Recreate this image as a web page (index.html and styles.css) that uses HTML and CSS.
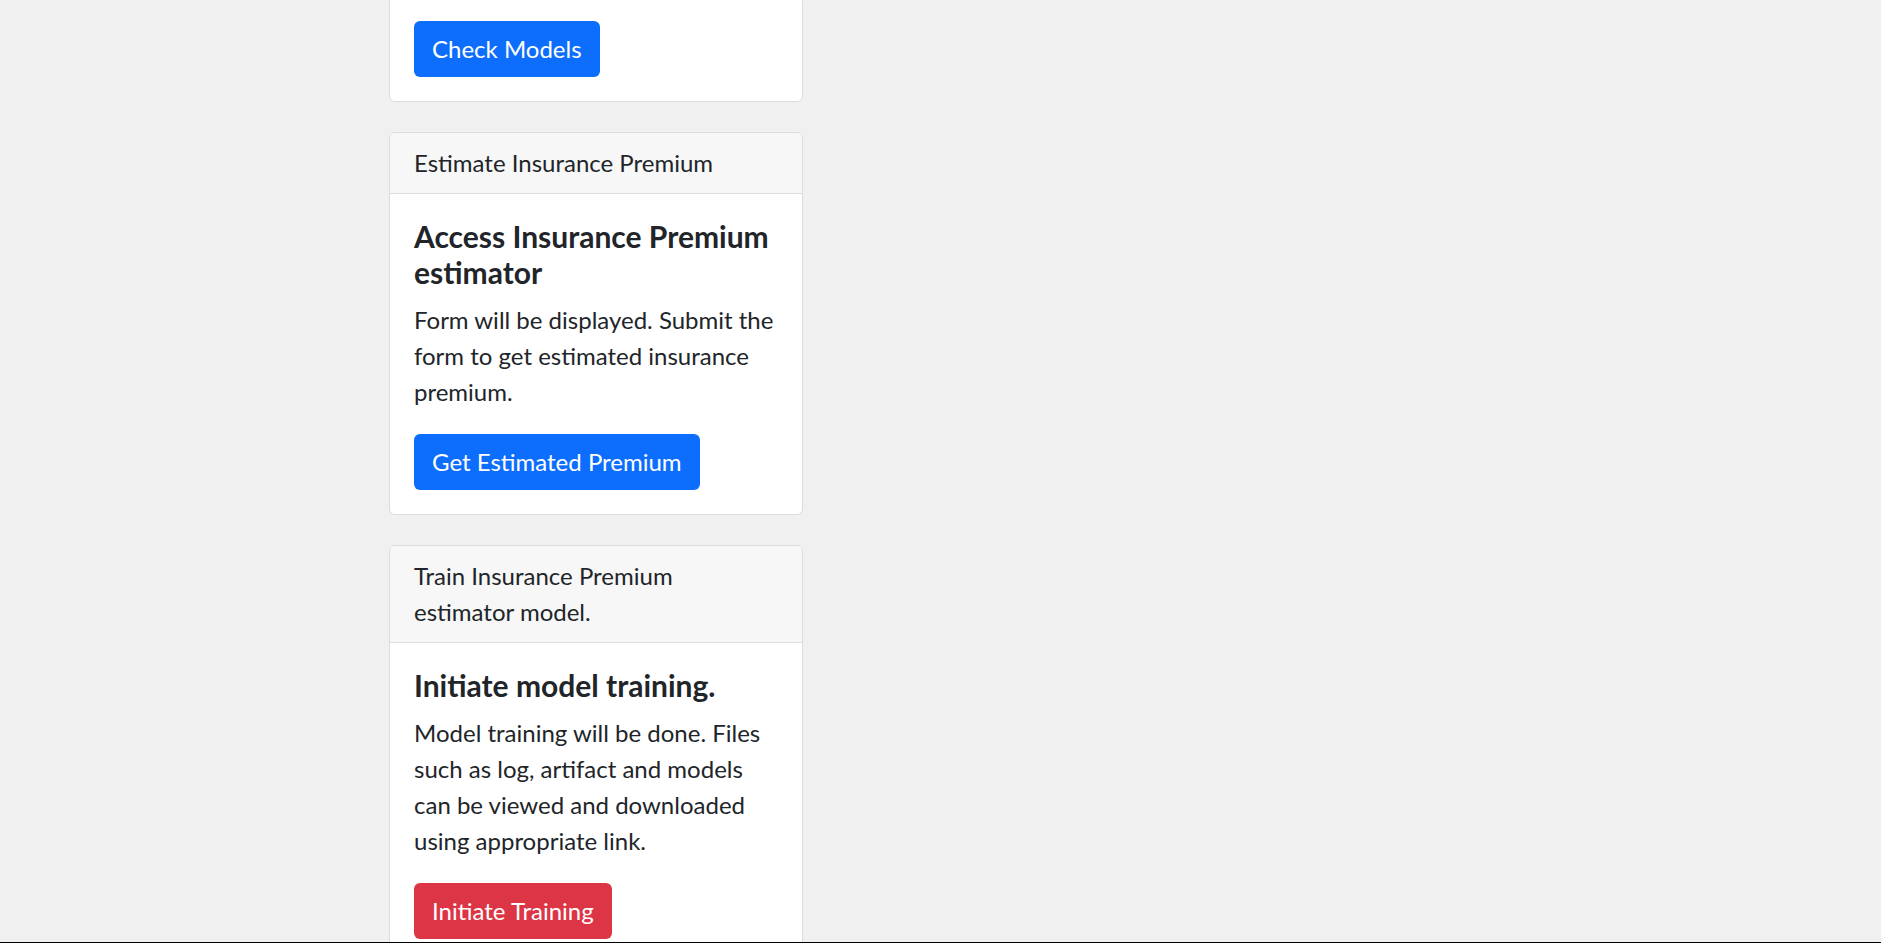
FILE: index.html
```html
<!DOCTYPE html>
<html lang="en">
<head>
<meta charset="utf-8">
<title>Insurance Premium</title>
<link rel="stylesheet" href="styles.css">
</head>
<body>
<main class="page">
  <div class="column">
    <section class="card card-first">
      <div class="card-body">
        <a class="btn btn-primary" href="#">Check Models</a>
      </div>
    </section>

    <section class="card">
      <div class="card-header">Estimate Insurance Premium</div>
      <div class="card-body">
        <h5 class="card-title">Access Insurance Premium estimator</h5>
        <p class="card-text">Form will be displayed. Submit the form to get estimated insurance premium.</p>
        <a class="btn btn-primary" href="#">Get Estimated Premium</a>
      </div>
    </section>

    <section class="card">
      <div class="card-header">Train Insurance Premium estimator model.</div>
      <div class="card-body">
        <h5 class="card-title">Initiate model training.</h5>
        <p class="card-text">Model training will be done. Files such as log, artifact and models can be viewed and downloaded using appropriate link.</p>
        <a class="btn btn-danger" href="#">Initiate Training</a>
      </div>
    </section>
  </div>
</main>
<div class="bottom-edge"></div>
</body>
</html>
```
FILE: styles.css
```css
html, body {
  margin: 0;
  background: #f0f0f0;
}
body {
  font-family: Lato, "Open Sans", sans-serif;
  font-size: 24px;
  line-height: 36px;
  color: #212529;
}
.page {
  padding-left: 389px;
}
.column {
  width: 414px;
  display: flex;
  flex-direction: column;
  gap: 30px;
}
.card {
  background: #fff;
  border: 1px solid #dcdcdc;
  border-radius: 6px;
  overflow: hidden;
}
.card-first {
  margin-top: -4px;
}
.card-header {
  background: #f7f7f7;
  border-bottom: 1px solid #dcdcdc;
  padding: 12px 24px;
}
.card-body {
  padding: 24px;
  display: flex;
  flex-direction: column;
  align-items: flex-start;
}
.card-title {
  margin: 0 0 12px;
  font-size: 30px;
  line-height: 36px;
  font-weight: 700;
  color: #212529;
}
.card-text {
  margin: 0 0 24px;
}
.btn {
  display: block;
  box-sizing: border-box;
  height: 56px;
  padding: 10px 18px;
  border-radius: 6px;
  color: #fff;
  text-decoration: none;
  font-size: 24px;
  line-height: 36px;
}
.btn-primary {
  background: #0d6efd;
}
.btn-danger {
  background: #dc3545;
}
.bottom-edge {
  position: fixed;
  left: 0;
  right: 0;
  bottom: 0;
  height: 1px;
  background: #000;
}
```
